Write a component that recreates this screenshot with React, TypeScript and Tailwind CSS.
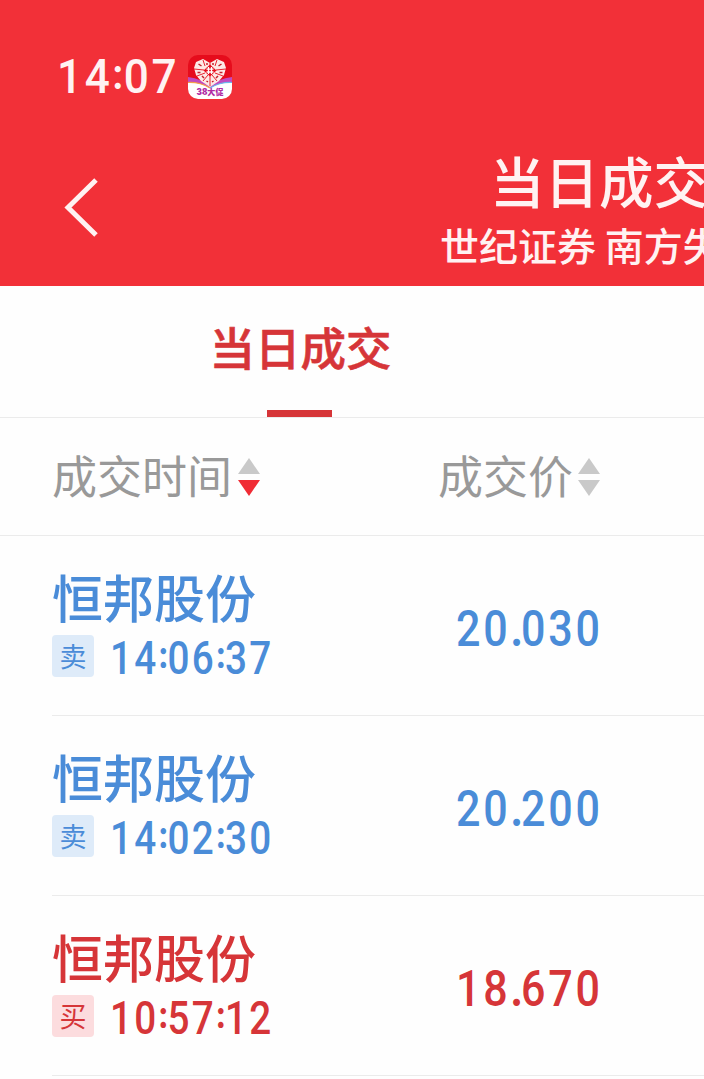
import { clsx } from 'clsx'

type Side = 'sell' | 'buy'

interface Trade {
  name: string
  side: Side
  time: string
  price: string
}

const trades: Trade[] = [
  { name: '恒邦股份', side: 'sell', time: '14:06:37', price: '20.030' },
  { name: '恒邦股份', side: 'sell', time: '14:02:30', price: '20.200' },
  { name: '恒邦股份', side: 'buy', time: '10:57:12', price: '18.670' },
]

const PromoIcon = () => (
  <svg viewBox="0 0 44 44" className="h-11 w-11">
    <defs>
      <clipPath id="promo">
        <rect width="44" height="44" rx="10" />
      </clipPath>
    </defs>
    <g clipPath="url(#promo)">
      <rect width="44" height="44" fill="#e60c1c" />
      <path d="M0 26 L22 31 L44 26 V44 H0Z" fill="#fff" />
      <path d="M0 22 Q14 24 22 31 Q30 24 44 22 V27 Q31 27 22 33 Q13 27 0 27Z" fill="#c04bc0" />
      <path d="M0 27.500 Q12 27 22 33" stroke="#f5a04a" strokeWidth="1.2" fill="none" />
      <path d="M44 27.500 Q32 27 22 33" stroke="#6cb6ee" strokeWidth="1.2" fill="none" />
      <path d="M22 32 L13 26 L8 20 L6 13 L8 7 L15 4 L22 8 L29 4 L36 7 L38 13 L36 20 L31 26Z" fill="#fde9e6" />
      <path
        d="M22 8 V11 M22 20 V31 M15 5 L17 11 M29 5 L27 11 M6 14 L16 15 M38 14 L28 15 M9 21 L17 18 M35 21 L27 18 M15 26 L20 20 M29 26 L24 20"
        stroke="#e60c1c"
        strokeWidth="0.9"
      />
      <path
        d="M10.500 9 l3 2 M9.500 17.500 h3 M33.500 9 l-3 2 M34.500 17.500 h-3 M19 8 v2 M25 8 v2 M14 21 l2 2 M30 21 l-2 2 M18.500 26 l1.500 1 M25.500 26 l-1.500 1"
        stroke="#c4202c"
        strokeWidth="1.5"
      />
      <path d="M22 9.500 L28.500 15.500 L22 21.500 L15.500 15.500Z" fill="#e60c1c" />
      <path d="M20.500 12 V19 M23.500 12 V19 M18.500 14.200 H25.500 M18.500 17 H25.500" stroke="#fff" strokeWidth="1.3" />
      <text
        x="22"
        y="40"
        textAnchor="middle"
        textLength="27"
        lengthAdjust="spacingAndGlyphs"
        fontSize="8.500"
        fontWeight="900"
        fontFamily="Inter, 'Noto Sans CJK SC', sans-serif"
        fill="#b02aa4"
      >
        38大促
      </text>
    </g>
  </svg>
)

const SortIcon = ({ desc }: { desc?: boolean }) => (
  <svg viewBox="0 0 22 38" className="h-[38px] w-[22px]">
    <path d="M11 0 L22 16 H0Z" fill="#c9c9c9" />
    <path d="M0 22 H22 L11 38Z" fill={desc ? '#f02c35' : '#c9c9c9'} />
  </svg>
)

const Time = ({ value }: { value: string }) => (
  <span className="inline-block origin-left scale-x-[0.85] font-[Roboto,sans-serif] text-[45.500px] leading-[42px] font-medium tracking-[2.8px] whitespace-nowrap">
    {value.split(/(:)/).map((part, i) =>
      part === ':' ? (
        <span key={i} className="relative -top-[6px] text-[36px] font-black tracking-[-0.500px]">
          :
        </span>
      ) : (
        part
      )
    )}
  </span>
)

const Price = ({ value }: { value: string }) => {
  const [whole, fraction] = value.split('.')
  return (
    <span className="inline-block origin-left scale-x-[0.86] font-[Roboto,sans-serif] text-[50px] leading-[50px] font-medium tracking-[3.3px] whitespace-nowrap">
      {whole}
      <span className="font-bold tracking-[-2.500px]">.</span>
      {fraction}
    </span>
  )
}

const TradeRow = ({ trade }: { trade: Trade }) => {
  const sell = trade.side === 'sell'
  return (
    <li
      className={clsx(
        'ml-[52px] flex h-[180px] border-b border-[#ebebeb]',
        sell ? 'text-[#4a8cd8]' : 'text-[#d63538]'
      )}
    >
      <div className="w-[404px] pt-[33px]">
        <div className="text-[51px] leading-[54px] font-medium">{trade.name}</div>
        <div className="mt-[12px] flex items-center">
          <span
            className={clsx(
              'flex h-[42px] w-[42px] items-center justify-center rounded-[4px] pb-[2px] text-[27px] leading-none',
              sell ? 'bg-[#deebf9]' : 'bg-[#fcdcde]'
            )}
          >
            {sell ? '卖' : '买'}
          </span>
          <div className="ml-[16px] h-[42px] pt-[3px]">
            <Time value={trade.time} />
          </div>
        </div>
      </div>
      <div className="pt-[68px]">
        <Price value={trade.price} />
      </div>
    </li>
  )
}

export default function App() {
  return (
    <div className="h-[1079px] w-[704px] overflow-hidden bg-[#fefefe] font-['Noto_Sans_CJK_SC',sans-serif]">
      <header className="flex h-[286px] flex-col bg-[#f23038] text-[#fff2f2]">
        <div className="flex h-[99px] items-end pl-[57px]">
          <div className="w-[131px]">
            <span className="inline-block origin-left translate-y-[1px] scale-x-[0.9] font-[Roboto,sans-serif] text-[49px] leading-[42px] font-medium tracking-[3px]">
              14<span className="relative -top-[4px] text-[42px] font-bold tracking-[0.5px]">:</span>07
            </span>
          </div>
          <PromoIcon />
        </div>
        <div className="flex flex-1">
          <button className="mt-[79px] ml-[64px] h-[60px] w-[34px]" aria-label="返回">
            <svg viewBox="0 0 34 60" className="h-[60px] w-[34px]" fill="none">
              <path d="M32 2 L4 29.500 L32 57" stroke="#fff2f2" strokeWidth="5" />
            </svg>
          </button>
          <div className="ml-[342px] w-[264px] whitespace-nowrap">
            <h1 className="mt-[50px] ml-[50px] text-[54.500px] leading-[62px] font-medium">当日成交</h1>
            <p className="mt-[8px] text-[39px] leading-[50px] font-medium">世纪证券 南方失</p>
          </div>
        </div>
      </header>

      <nav className="h-[132px] border-b border-[#ebebeb]">
        <div className="flex h-full w-[598px] flex-col items-center">
          <span className="mt-[32px] ml-[3px] text-[45.500px] leading-[56px] font-medium text-[#d63538] [-webkit-text-stroke:0.6px_#d63538]">
            当日成交
          </span>
          <span className="mt-[36px] h-[7px] w-[65px] bg-[#d63538]" />
        </div>
      </nav>

      <div className="flex h-[118px] items-center border-b border-[#ebebeb] text-[45px] text-[#999]">
        <div className="ml-[52px] flex w-[386px] items-center gap-[6px]">
          <span className="-mt-[4px]">成交时间</span>
          <SortIcon desc />
        </div>
        <div className="flex items-center gap-[5px]">
          <span className="-mt-[4px]">成交价</span>
          <SortIcon />
        </div>
      </div>

      <ul>
        {trades.map(trade => (
          <TradeRow key={trade.time} trade={trade} />
        ))}
      </ul>
    </div>
  )
}
